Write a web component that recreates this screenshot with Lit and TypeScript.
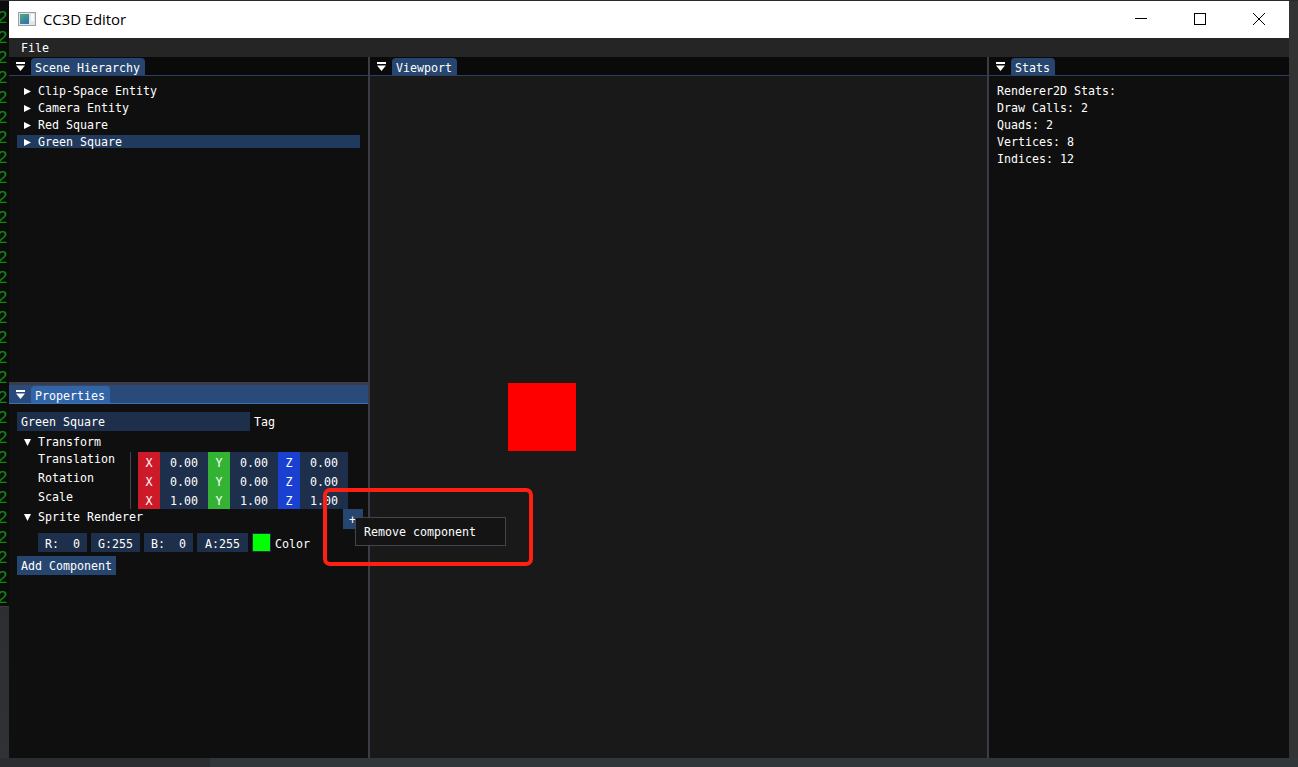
import { LitElement, css, html, svg } from 'lit'
import { customElement, property } from 'lit/decorators.js'

const menuIcon = html`<svg class="dock-icon" width="9" height="9" viewBox="0 0 9 9">
  <rect x="0" y="0" width="9" height="2" fill="#fff"></rect>
  <path d="M0 3.5H9L4.5 9Z" fill="#fff"></path>
</svg>`

const arrowRight = svg`<path d="M0 0L7 3.5L0 7Z" fill="#fff"></path>`
const arrowDown = svg`<path d="M0 0H7L3.5 7Z" fill="#fff"></path>`

/** A collapsed or open tree node, as drawn by the Dear ImGui tree widget. */
@customElement('tree-node')
class TreeNode extends LitElement {
  @property({ type: String }) label = ''
  @property({ type: Boolean }) open = false
  @property({ type: Boolean }) selected = false

  static styles = css`
    :host {
      display: block;
    }
    .node {
      display: flex;
      align-items: center;
      height: 13px;
      white-space: pre;
      padding-left: 7px;
      gap: 7px;
      color: #fff;
    }
    .node.selected {
      background: #1f3a5c;
    }
    .node span {
      line-height: 14px;
      height: 13px;
    }
    svg {
      flex: none;
      margin-top: 1px;
    }
  `

  render() {
    return html`<div class="node ${this.selected ? 'selected' : ''}">
      <svg width="7" height="7" viewBox="0 0 7 7">${this.open ? arrowDown : arrowRight}</svg>
      <span>${this.label}</span>
    </div>`
  }
}

/** Title strip of a docked panel: dock menu icon and one tab. */
@customElement('dock-tabs')
class DockTabs extends LitElement {
  @property({ type: String }) label = ''
  @property({ type: Boolean }) focused = false

  static styles = css`
    :host {
      display: block;
    }
    .bar {
      display: flex;
      align-items: flex-end;
      height: 18px;
      padding-left: 7px;
      background: #0a0a0a;
      border-bottom: 1px solid #2a3f63;
    }
    .bar.focused {
      background: #294a7a;
      border-bottom-color: #3a72b8;
    }
    .icon {
      display: flex;
      align-items: center;
      height: 18px;
      width: 15px;
    }
    .tab {
      height: 17px;
      line-height: 20px;
      padding: 0 5px 0 4px;
      border-radius: 4px 4px 0 0;
      background: #26466f;
      color: #fff;
      white-space: pre;
    }
    .bar.focused .tab {
      background: #3265a8;
    }
  `

  render() {
    return html`<div class="bar ${this.focused ? 'focused' : ''}">
      <div class="icon">${menuIcon}</div>
      <div class="tab">${this.label}</div>
    </div>`
  }
}

@customElement('app-root')
export class AppRoot extends LitElement {
  static styles = css`
    :host {
      display: block;
      position: relative;
      width: 1298px;
      height: 767px;
      overflow: hidden;
      background: #2e3033;
      font-family: 'DejaVu Sans Mono', 'Liberation Mono', monospace;
      font-size: 11.63px;
      color: #fff;
    }
    .desktop {
      display: grid;
      grid-template-columns: 9px 1280px 9px;
      grid-template-rows: 1px 757px 9px;
      height: 767px;
    }
    .top {
      grid-column: 1 / 4;
      background: #2a2a2a;
    }
    .terminal-col {
      display: flex;
      flex-direction: column;
    }
    .terminal {
      height: 605px;
      overflow: hidden;
      background: #0c0c0c;
      color: #0d8a0d;
      font-family: 'Liberation Mono', monospace;
      font-size: 18px;
      line-height: 20px;
      margin-left: -3px;
      padding-top: 7px;
      white-space: pre;
      box-sizing: border-box;
    }
    .rest-left {
      flex: 1;
      background: linear-gradient(#2c2e31, #303236);
      border-top: 1px solid #3a3c40;
    }
    .right-edge {
      background: #333333;
    }
    .bottom {
      grid-column: 1 / 4;
      display: flex;
    }
    .bottom-a {
      width: 210px;
      background: #2b2d30;
    }
    .bottom-b {
      flex: 1;
      background: #31363b;
    }

    .window {
      display: flex;
      flex-direction: column;
      background: #3c3c46;
    }
    .titlebar {
      display: flex;
      align-items: center;
      flex: none;
      height: 37px;
      padding-bottom: 1px;
      box-sizing: border-box;
      background: #fff;
      color: #000;
    }
    .app-icon {
      margin-left: 9px;
    }
    .title {
      margin-left: 7px;
      font-family: 'Open Sans', 'Noto Sans', sans-serif;
      font-size: 15px;
      letter-spacing: -0.1px;
    }
    .controls {
      display: flex;
      margin-left: auto;
      margin-right: 1px;
    }
    .ctl {
      display: flex;
      align-items: center;
      justify-content: center;
      width: 59px;
      height: 36px;
    }
    .menubar {
      flex: none;
      height: 19px;
      line-height: 20px;
      padding-left: 12px;
      background: #252525;
    }
    .panes {
      flex: 1;
      display: grid;
      grid-template-columns: 359px 617px 300px;
      column-gap: 2px;
      min-height: 0;
    }
    .left {
      display: grid;
      grid-template-rows: 325px 373px;
      row-gap: 3px;
    }
    .panel {
      display: flex;
      flex-direction: column;
      background: #0f0f0f;
      min-height: 0;
    }
    .viewport {
      background: #191919;
    }
    .tree {
      display: flex;
      flex-direction: column;
      gap: 4px;
      padding: 8px 8px 0;
    }
    .stats {
      display: flex;
      flex-direction: column;
      gap: 4px;
      padding: 8px 8px 0;
    }
    .stats div {
      height: 13px;
      line-height: 14px;
    }

    .props {
      padding: 8px 8px 0;
    }
    .tag-row {
      display: flex;
      height: 19px;
      line-height: 21px;
      margin-bottom: 4px;
    }
    .tag-input {
      width: 233px;
      padding-left: 4px;
      box-sizing: border-box;
      background: #1d2f4a;
      white-space: pre;
    }
    .tag-label {
      margin-left: 4px;
    }
    .vec-table {
      margin-top: 4px;
    }
    .vec-row {
      display: flex;
      height: 19px;
    }
    .vec-label {
      width: 92px;
      padding: 1px 0 0 21px;
      line-height: 13px;
      border-right: 1px solid #444450;
      margin-right: 7px;
      flex: none;
    }
    .axis {
      width: 22px;
      line-height: 23px;
      text-align: center;
    }
    .axis.x {
      background: #cc1a29;
    }
    .axis.y {
      background: #33b233;
    }
    .axis.z {
      background: #1a40d1;
    }
    .val {
      width: 48px;
      line-height: 23px;
      text-align: center;
      background: #1d2f4a;
    }
    .sprite {
      margin-top: 1px;
    }
    .color-row {
      display: flex;
      align-items: center;
      height: 19px;
      margin: 10px 0 4px 21px;
      gap: 4px;
    }
    .chan {
      width: 49px;
      height: 19px;
      line-height: 23px;
      text-align: center;
      white-space: pre;
      background: #1d2f4a;
    }
    .chan.alpha {
      width: 51px;
    }
    .swatch {
      width: 17px;
      height: 17px;
      background: #00ff00;
      border: 1px solid #1d2f4a;
    }
    .color-label {
      line-height: 23px;
      height: 19px;
    }
    .add {
      display: inline-block;
      height: 19px;
      line-height: 21px;
      padding: 0 4px;
      background: #26466f;
      white-space: pre;
    }

    .red-square {
      position: absolute;
      left: 508px;
      top: 383px;
      width: 68px;
      height: 68px;
      background: #ff0000;
    }
    .plus {
      position: absolute;
      left: 343px;
      top: 509px;
      width: 20px;
      height: 20px;
      line-height: 23px;
      padding-left: 6px;
      box-sizing: border-box;
      background: #26466f;
    }
    .popup {
      position: absolute;
      left: 355px;
      top: 517px;
      width: 151px;
      height: 29px;
      box-sizing: border-box;
      padding-left: 8px;
      line-height: 28px;
      border: 1px solid #444450;
      background: rgba(20, 20, 20, 0.96);
      white-space: pre;
    }
    .note {
      position: absolute;
      left: 323px;
      top: 488px;
      width: 210px;
      height: 78px;
      box-sizing: border-box;
      border: 4px solid #ff2012;
      border-radius: 7px;
    }
  `

  render() {
    const vectors: [string, string][] = [
      ['Translation', '0.00'],
      ['Rotation', '0.00'],
      ['Scale', '1.00'],
    ]
    return html`
      <div class="desktop">
        <div class="top"></div>
        <div class="terminal-col">
          <div class="terminal">${Array(30).fill('2').join('\n')}</div>
          <div class="rest-left"></div>
        </div>
        <div class="window">
          <div class="titlebar">
            <svg class="app-icon" width="18" height="14" viewBox="0 0 18 14">
              <defs>
                <linearGradient id="ico" x1="0" y1="0" x2="0.6" y2="1">
                  <stop offset="0" stop-color="#5aa878"></stop>
                  <stop offset="1" stop-color="#2f78ad"></stop>
                </linearGradient>
              </defs>
              <rect x="0.5" y="0.5" width="17" height="13" fill="#e2e6e6" stroke="#9a9fa4"></rect>
              <rect x="2" y="2" width="9" height="10" fill="url(#ico)"></rect>
              <rect x="13" y="2" width="3" height="7" fill="#fafcfc"></rect>
            </svg>
            <span class="title">CC3D Editor</span>
            <div class="controls">
              <div class="ctl">
                <svg width="12" height="12" viewBox="0 0 12 12"><path d="M0 5.5H12" stroke="#000"></path></svg>
              </div>
              <div class="ctl">
                <svg width="12" height="12" viewBox="0 0 12 12"><rect x="0.5" y="0.5" width="11" height="11" fill="none" stroke="#000"></rect></svg>
              </div>
              <div class="ctl">
                <svg width="12" height="12" viewBox="0 0 12 12"><path d="M0 0L12 12M12 0L0 12" stroke="#000"></path></svg>
              </div>
            </div>
          </div>
          <div class="menubar">File</div>
          <div class="panes">
            <div class="left">
              <div class="panel">
                <dock-tabs label="Scene Hierarchy"></dock-tabs>
                <div class="tree">
                  <tree-node label="Clip-Space Entity"></tree-node>
                  <tree-node label="Camera Entity"></tree-node>
                  <tree-node label="Red Square"></tree-node>
                  <tree-node label="Green Square" selected></tree-node>
                </div>
              </div>
              <div class="panel">
                <dock-tabs label="Properties" focused></dock-tabs>
                <div class="props">
                  <div class="tag-row">
                    <div class="tag-input">Green Square</div>
                    <div class="tag-label">Tag</div>
                  </div>
                  <tree-node label="Transform" open></tree-node>
                  <div class="vec-table">
                    ${vectors.map(
                      ([name, v]) => html`<div class="vec-row">
                        <div class="vec-label">${name}</div>
                        <div class="axis x">X</div><div class="val">${v}</div>
                        <div class="axis y">Y</div><div class="val">${v}</div>
                        <div class="axis z">Z</div><div class="val">${v}</div>
                      </div>`
                    )}
                  </div>
                  <tree-node class="sprite" label="Sprite Renderer" open></tree-node>
                  <div class="color-row">
                    <div class="chan">R:  0</div>
                    <div class="chan">G:255</div>
                    <div class="chan">B:  0</div>
                    <div class="chan alpha">A:255</div>
                    <div class="swatch"></div>
                    <div class="color-label">Color</div>
                  </div>
                  <div class="add">Add Component</div>
                </div>
              </div>
            </div>
            <div class="panel viewport">
              <dock-tabs label="Viewport"></dock-tabs>
            </div>
            <div class="panel">
              <dock-tabs label="Stats"></dock-tabs>
              <div class="stats">
                <div>Renderer2D Stats:</div>
                <div>Draw Calls: 2</div>
                <div>Quads: 2</div>
                <div>Vertices: 8</div>
                <div>Indices: 12</div>
              </div>
            </div>
          </div>
        </div>
        <div class="right-edge"></div>
        <div class="bottom">
          <div class="bottom-a"></div>
          <div class="bottom-b"></div>
        </div>
      </div>
      <div class="red-square"></div>
      <div class="plus">+</div>
      <div class="popup">Remove component</div>
      <div class="note"></div>
    `
  }
}
